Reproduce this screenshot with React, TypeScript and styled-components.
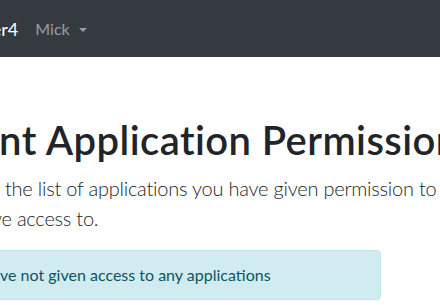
import React from "react";
import styled, { createGlobalStyle } from "styled-components";

const GlobalStyle = createGlobalStyle`
  html, body {
    margin: 0;
    padding: 0;
    overflow: hidden;
    background: #ffffff;
  }
  body {
    font-family: "Lato", "Open Sans", sans-serif;
    color: #212529;
    font-size: 16px;
    line-height: 1.5;
  }
  * { box-sizing: border-box; }
`;

const Navbar = styled.nav`
  display: flex;
  align-items: center;
  height: 57px;
  background: #343a40;
  padding: 0 16px 0 0;
  white-space: nowrap;
`;

const Brand = styled.a`
  margin-left: -104px;
  margin-right: 17px;
  font-size: 18px;
  line-height: 30px;
  color: #ffffff;
  text-decoration: none;
  padding-top: 1px;
`;

const NavItem = styled.a`
  display: flex;
  align-items: center;
  gap: 9px;
  font-size: 16px;
  line-height: 24px;
  color: rgba(255, 255, 255, 0.5);
  text-decoration: none;
  padding-top: 1px;
`;

const Caret = styled.span`
  display: inline-block;
  width: 0;
  height: 0;
  border-top: 4.5px solid rgba(255, 255, 255, 0.5);
  border-left: 4.5px solid transparent;
  border-right: 4.5px solid transparent;
  margin-top: 1px;
`;

const Main = styled.main`
  padding-top: 59px;
`;

const Container = styled.div`
  margin-left: -70px;
  width: 690px;
`;

const Title = styled.h1`
  margin: 0 0 9px;
  font-size: 40px;
  font-weight: 600;
  line-height: 48px;
  letter-spacing: 0.42px;
  white-space: nowrap;
`;

const Lead = styled.p`
  margin: 0 0 17px;
  font-size: 20px;
  font-weight: 300;
  line-height: 30px;
  letter-spacing: -0.23px;
`;

const LeadLine = styled.span`
  display: block;
  white-space: nowrap;
`;

const Row = styled.div`
  display: flex;
`;

const Alert = styled.div`
  width: 451px;
  padding: 12px 20px 12px 22px;
  border: 1px solid #bee5eb;
  border-radius: 4px;
  background: #d1ecf1;
  color: #0c5460;
  font-size: 16px;
  line-height: 24px;
  white-space: nowrap;
`;

export default function App() {
  return (
    <>
      <GlobalStyle />
      <Navbar>
        <Brand href="#">IdentityServer4</Brand>
        <NavItem href="#">
          Mick
          <Caret />
        </NavItem>
      </Navbar>
      <Main>
        <Container>
          <Title>Client Application Permissions</Title>
          <Lead>
            <LeadLine>Below is the list of applications you have given permission to and the resources</LeadLine>
            <LeadLine>they have access to.</LeadLine>
          </Lead>
          <Row>
            <Alert>You have not given access to any applications</Alert>
          </Row>
        </Container>
      </Main>
    </>
  );
}
